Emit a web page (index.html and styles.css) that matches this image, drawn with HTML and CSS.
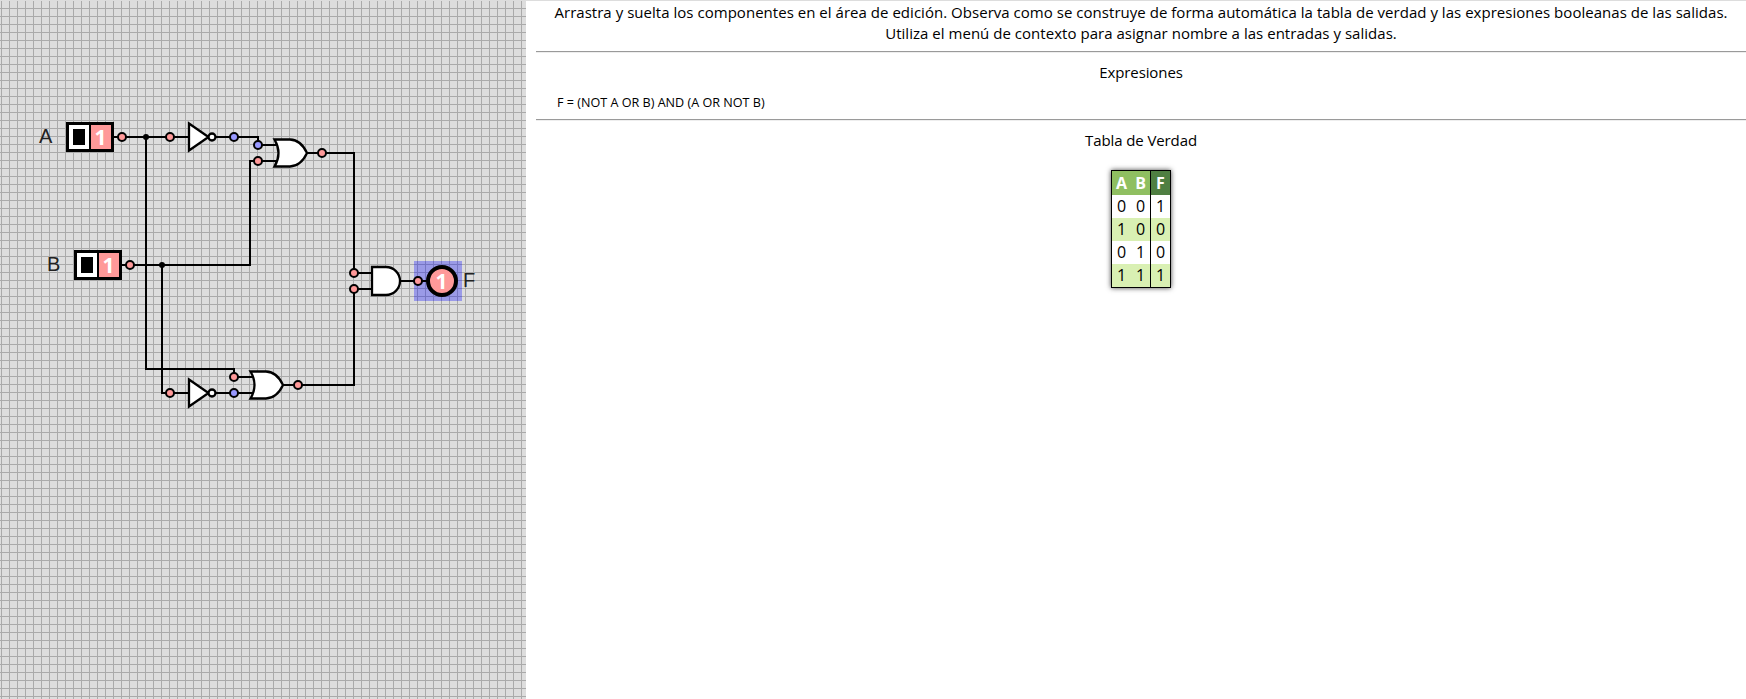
FILE: index.html
```html
<!DOCTYPE html>
<html lang="es">
<head>
<meta charset="utf-8">
<title>Tabla de verdad</title>
<link rel="stylesheet" href="styles.css">
</head>
<body>
<main class="app">
  <section class="editor">
    <svg class="circuit" width="526" height="698" viewBox="0 1 526 698">
      <rect class="selection" x="414" y="261" width="48" height="40"/>
      <g class="wire">
        <path d="M113 137H188M216 137H258V145H276"/>
        <path d="M146 137V369H234V377H254"/>
        <path d="M121 265H250V161H276"/>
        <path d="M162 265V393H188M216 393H254"/>
        <path d="M306 153H354V273H372"/>
        <path d="M282 385H354V289H372"/>
        <path d="M400 281H428"/>
      </g>
      <circle cx="146" cy="137" r="3"/>
      <circle cx="162" cy="265" r="3"/>
      <defs>
        <g id="switch">
          <rect class="box" x="67.5" y="123.500" width="45" height="27"/>
          <rect class="on" x="91" y="125" width="20" height="24"/>
          <path d="M90 125V149" stroke="#000" stroke-width="2"/>
          <rect x="73" y="129" width="12" height="16"/>
          <text class="bit" x="100.500" y="144.500">1</text>
        </g>
        <g id="not" class="gate">
          <path d="M189 123.500V150.500L208.500 137Z"/>
          <circle cx="212" cy="137" r="3.500"/>
        </g>
        <path id="or" class="gate" d="M274.500 139.500H290Q301 140 307 153Q301 166 290 166.500H274.500Q282.500 153 274.500 139.500Z"/>
      </defs>
      <use href="#switch"/>
      <use href="#switch" x="8" y="128"/>
      <use href="#not"/>
      <use href="#not" y="256"/>
      <use href="#or"/>
      <use href="#or" x="-24" y="232"/>
      <path class="gate" d="M372 267H386A14 14 0 0 1 386 295H372Z"/>
      <g class="pin">
        <circle cx="122" cy="137" r="4"/><circle cx="170" cy="137" r="4"/>
        <circle cx="258" cy="161" r="4"/><circle cx="322" cy="153" r="4"/>
        <circle cx="130" cy="265" r="4"/><circle cx="354" cy="273" r="4"/>
        <circle cx="354" cy="289" r="4"/><circle cx="418" cy="281" r="4"/>
        <circle cx="234" cy="377" r="4"/><circle cx="170" cy="393" r="4"/>
        <circle cx="298" cy="385" r="4"/>
      </g>
      <g class="pin low">
        <circle cx="234" cy="137" r="4"/><circle cx="258" cy="145" r="4"/><circle cx="234" cy="393" r="4"/>
      </g>
      <circle class="lamp" cx="442" cy="281" r="14"/>
      <text class="bit" x="441.500" y="288.500">1</text>
      <text class="name" x="39" y="143">A</text>
      <text class="name" x="47" y="271">B</text>
      <text class="name" x="463" y="287">F</text>
    </svg>
  </section>
  <section class="panel">
    <p class="intro"><span class="l1">Arrastra y suelta los componentes en el área de edición. Observa como se construye de forma automática la tabla de verdad y las expresiones booleanas de las salidas.</span><br><span class="l2">Utiliza el menú de contexto para asignar nombre a las entradas y salidas.</span></p>
    <hr>
    <h2 class="title">Expresiones</h2>
    <p class="expr">F = (NOT A OR B) AND (A OR NOT B)</p>
    <hr>
    <h2 class="title">Tabla de Verdad</h2>
    <table class="truth">
      <tr><th>A</th><th>B</th><th class="out">F</th></tr>
      <tr><td>0</td><td>0</td><td class="out">1</td></tr>
      <tr><td>1</td><td>0</td><td class="out">0</td></tr>
      <tr><td>0</td><td>1</td><td class="out">0</td></tr>
      <tr><td>1</td><td>1</td><td class="out">1</td></tr>
    </table>
  </section>
</main>
</body>
</html>
```
FILE: styles.css
```css
* { box-sizing: border-box; }
body { margin: 0; background: #fff; color: #000; font: 15px/21px "Open Sans", "Noto Sans", sans-serif; }
.app { display: flex; height: 699px; border-top: 1px solid #ddd; overflow: hidden; }
.editor {
  width: 526px;
  flex: none;
  background-color: #ddd;
  background-image: linear-gradient(90deg, #aaa 1px, transparent 1px), linear-gradient(#aaa 1px, transparent 1px);
  background-size: 8px 8px;
  background-position: 1px 7px;
}
.circuit { display: block; }
.wire { fill: none; stroke: #000; stroke-width: 2; }
.gate { fill: #fff; stroke: #000; stroke-width: 2.3; }
.box { fill: #fff; stroke: #000; stroke-width: 3; }
.on { fill: #f99; }
.pin { fill: #f99; stroke: #000; stroke-width: 2; }
.low { fill: #99f; }
.lamp { fill: #f99; stroke: #000; stroke-width: 4; }
.selection { fill: #00f; fill-opacity: .3; }
.bit { font: bold 21px "Open Sans", sans-serif; fill: #fff; text-anchor: middle; }
.name { font: 20px "Liberation Sans", sans-serif; fill: #222; }
.panel { flex: 1; min-width: 0; margin-left: 10px; }
.intro { margin: 1px 0 0; height: 42px; text-align: center; white-space: nowrap; }
.l1, .l2 { letter-spacing: .03px; }
hr { margin: 7px 0 0; height: 2px; border: 0; border-top: 1px solid #9a9a9a; border-bottom: 1px solid #eee; }
.title { margin: 9px 0 0; font-size: 15px; font-weight: 400; letter-spacing: -.1px; text-align: center; }
.expr { margin: 9px 0 0 21px; height: 21px; font-size: 12.6px; line-height: 21px; }
.expr + hr { margin-top: 6px; }
.truth { margin: 19px auto 0; font-size: 16px; border: 1px solid #000; border-collapse: separate; border-spacing: 0; box-shadow: 0 0 5px #444; }
.truth th, .truth td { width: 19px; height: 23px; padding: 0; text-align: center; }
.truth th { height: 24px; color: #fff; background: #8fbf61; }
.truth .out { width: 20px; border-left: 1px solid #000; }
.truth th.out { background: #4f7f42; }
.truth tr:nth-child(odd) td { background: #d9f0b3; }
```
